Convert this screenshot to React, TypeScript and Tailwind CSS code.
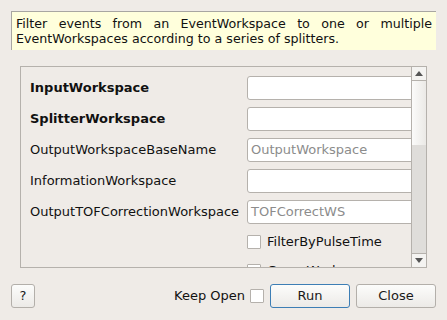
import React from 'react';

const rows = [
  { label: 'InputWorkspace', bold: true, placeholder: '' },
  { label: 'SplitterWorkspace', bold: true, placeholder: '' },
  { label: 'OutputWorkspaceBaseName', bold: false, placeholder: 'OutputWorkspace' },
  { label: 'InformationWorkspace', bold: false, placeholder: '' },
  { label: 'OutputTOFCorrectionWorkspace', bold: false, placeholder: 'TOFCorrectWS' },
];

const checks = ['FilterByPulseTime', 'GroupWorkspaces'];

function Button({ children, focused, className }: { children: React.ReactNode; focused?: boolean; className?: string }) {
  return (
    <button
      className={`h-[24px] rounded-[3px] border bg-gradient-to-b from-[#fcfcfb] to-[#eceae7] text-[13px] text-[#1a1a1a] ${
        focused ? 'border-[#3d7eb5]' : 'border-[#b3afaa]'
      } ${className ?? ''}`}
    >
      {children}
    </button>
  );
}

export default function App() {
  return (
    <div className="w-[447px] h-[320px] bg-[#efebe7] font-['DejaVu_Sans',sans-serif] text-[13px] text-[#111] overflow-hidden">
      <div className="pt-[11px] px-[11px]">
        <p className="h-[39px] border-t border-l border-[#a8a6a2] bg-[#ffffdc] pl-[4px] pr-[4px] pt-[4px] text-[12.65px] leading-[15px] text-justify [text-align-last:left]">
          Filter events from an EventWorkspace to one or multiple EventWorkspaces according to a series of splitters.
        </p>
      </div>

      <div className="mt-[16px] ml-[20px] w-[407px] h-[202px] border border-[#b5b1ac] flex">
        <div className="flex-1 overflow-hidden">
          <div className="grid grid-cols-[217px_170px] gap-y-[7px] pl-[9px] pt-[9px]">
            {rows.map((r) => (
              <React.Fragment key={r.label}>
                <div className={`h-[24px] flex items-center ${r.bold ? 'font-bold' : ''}`}>{r.label}</div>
                <div className="h-[24px] rounded-[3px] border border-[#b5b1ac] bg-white flex items-center pl-[3px] text-[#8c8c8c]">
                  {r.placeholder}
                </div>
              </React.Fragment>
            ))}
            {checks.map((c) => (
              <React.Fragment key={c}>
                <div />
                <div className="h-[22px] flex items-center gap-[6px]">
                  <span className="w-[14px] h-[14px] border border-[#b5b1ac] bg-white rounded-[1px]" />
                  <span>{c}</span>
                </div>
              </React.Fragment>
            ))}
          </div>
        </div>

        <div className="w-[15px] border-l border-[#b5b1ac] flex flex-col">
          <div className="h-[14px] border-b border-[#b5b1ac] bg-[#f4f3f1] flex items-center justify-center">
            <svg width="8" height="5" viewBox="0 0 8 5">
              <path d="M0 5 L4 0 L8 5 Z" fill="#555" />
            </svg>
          </div>
          <div className="h-[64px] bg-gradient-to-r from-[#fbfbfa] to-[#ebe9e6]" />
          <div className="flex-1 bg-[#dfddda]" />
          <div className="h-[14px] border-t border-[#b5b1ac] bg-[#f4f3f1] flex items-center justify-center">
            <svg width="8" height="5" viewBox="0 0 8 5">
              <path d="M0 0 L8 0 L4 5 Z" fill="#555" />
            </svg>
          </div>
        </div>
      </div>

      <div className="mt-[16px] px-[11px] flex items-center">
        <Button className="w-[24px]">?</Button>
        <div className="flex-1" />
        <span className="mr-[5px]">Keep Open</span>
        <span className="w-[14px] h-[14px] border border-[#b5b1ac] bg-white rounded-[1px] mr-[6px]" />
        <Button focused className="w-[80px]">Run</Button>
        <Button className="w-[80px] ml-[6px]">Close</Button>
      </div>
    </div>
  );
}
